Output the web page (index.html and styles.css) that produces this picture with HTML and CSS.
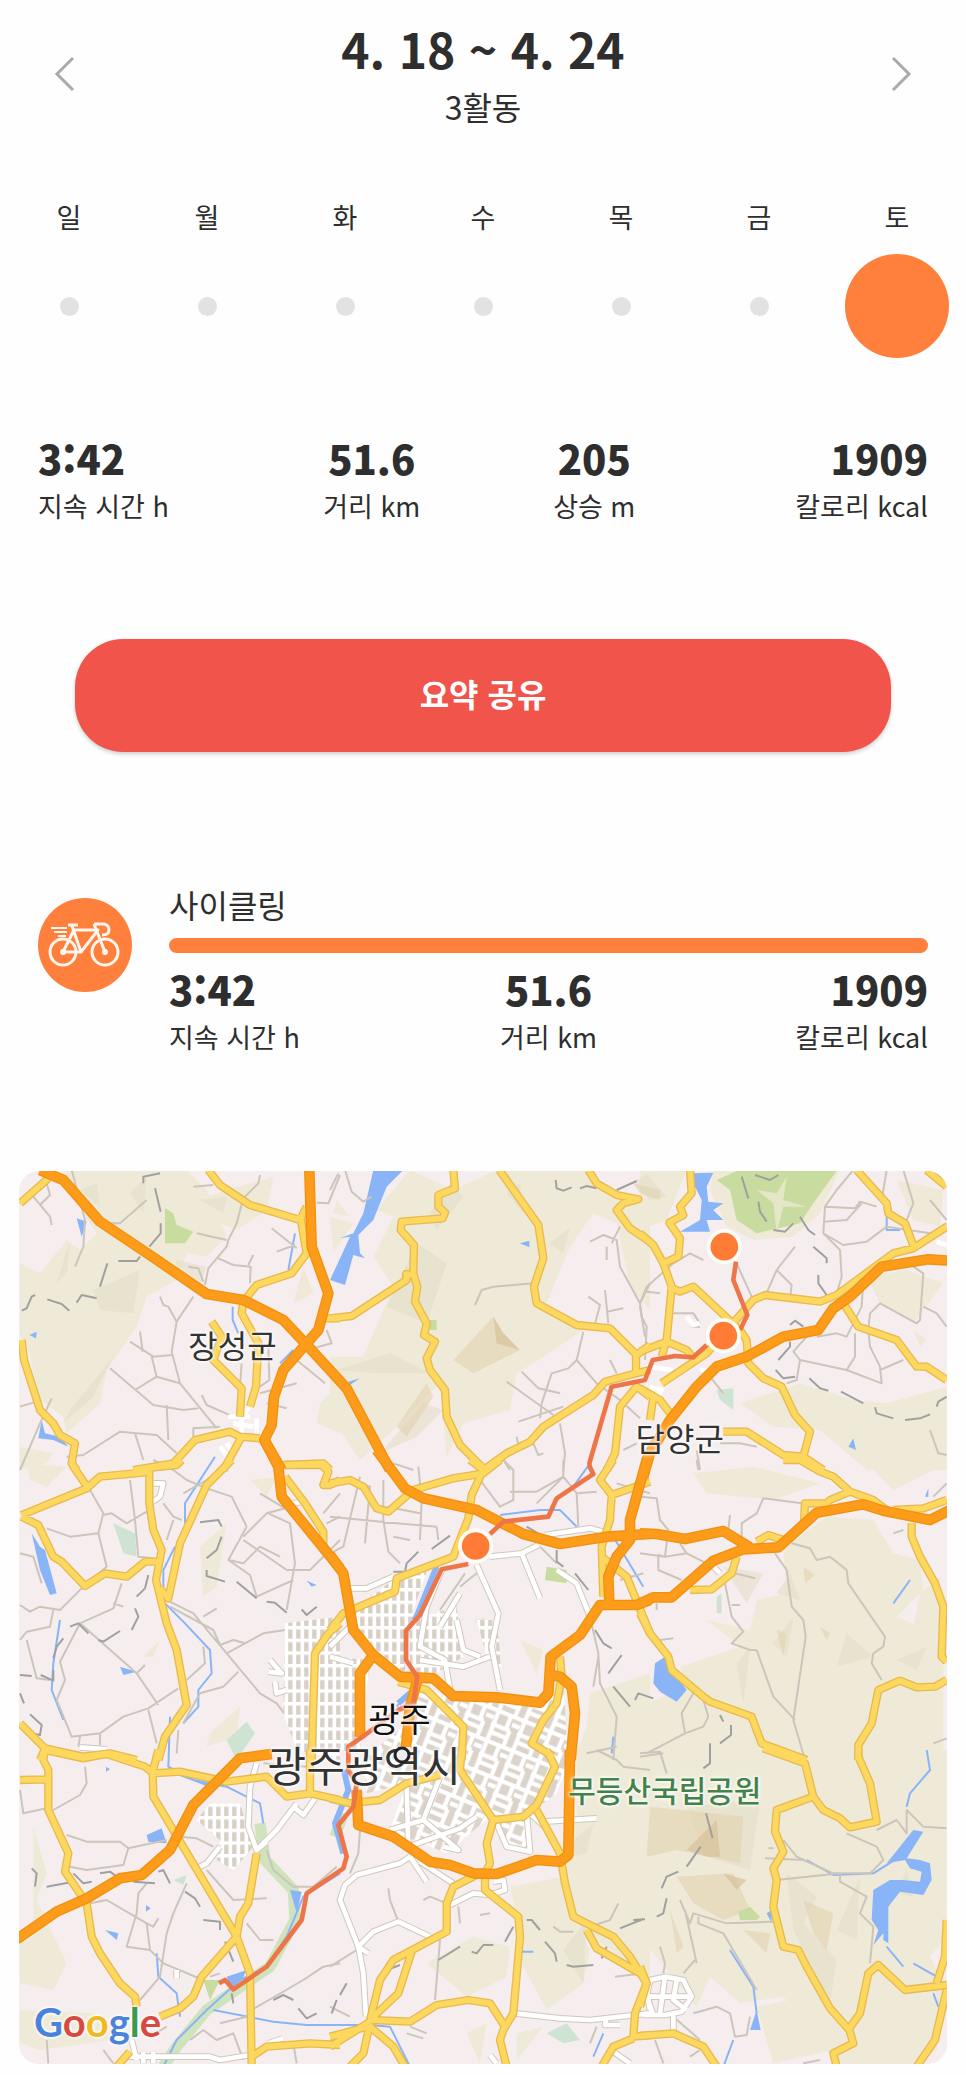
FILE: index.html
```html
<!DOCTYPE html>
<html lang="ko">
<head>
<meta charset="utf-8">
<meta name="viewport" content="width=device-width, initial-scale=1">
<title>주간 요약</title>
<link rel="stylesheet" href="styles.css">
</head>
<body>
<main class="summary">
  <header class="period">
    <button class="nav" type="button" aria-label="이전 주"><svg viewBox="0 0 48 48" aria-hidden="true"><path d="M32 8 16 24 32 40"/></svg></button>
    <div class="period-text">
      <h1>4. 18 ~ 4. 24</h1>
      <p>3활동</p>
    </div>
    <button class="nav" type="button" aria-label="다음 주"><svg viewBox="0 0 48 48" aria-hidden="true"><path d="M16 8 32 24 16 40"/></svg></button>
  </header>

  <ul class="week">
    <li><span>일</span><i class="dot"></i></li>
    <li><span>월</span><i class="dot"></i></li>
    <li><span>화</span><i class="dot"></i></li>
    <li><span>수</span><i class="dot"></i></li>
    <li><span>목</span><i class="dot"></i></li>
    <li><span>금</span><i class="dot"></i></li>
    <li><span>토</span><i class="dot active"></i></li>
  </ul>

  <dl class="stats totals">
    <div><dd>3:42</dd><dt>지속 시간 h</dt></div>
    <div><dd>51.6</dd><dt>거리 km</dt></div>
    <div><dd>205</dd><dt>상승 m</dt></div>
    <div><dd>1909</dd><dt>칼로리 kcal</dt></div>
  </dl>

  <button class="share" type="button">요약 공유</button>

  <section class="activity">
    <div class="sport">
      <svg viewBox="0 0 94 94" aria-hidden="true">
        <circle cx="25" cy="54" r="13"/><circle cx="67" cy="54" r="13"/>
        <path d="M25 54 36 32H60L43 54ZM43 54 34 28M30 27H40M56 26H66Q71 27 71 32T64 37M56 26 67 54"/>
        <path class="thin" d="M13 30H29M16 34H29M20 38H28"/>
        <circle class="hub" cx="25" cy="54" r="3"/><circle class="hub" cx="67" cy="54" r="3"/>
      </svg>
    </div>
    <div class="activity-body">
      <h2>사이클링</h2>
      <div class="bar"></div>
      <dl class="stats">
        <div><dd>3:42</dd><dt>지속 시간 h</dt></div>
        <div><dd>51.6</dd><dt>거리 km</dt></div>
        <div><dd>1909</dd><dt>칼로리 kcal</dt></div>
      </dl>
    </div>
  </section>

  <section class="map" aria-label="경로 지도">
    <svg class="map-art" viewBox="-3 3 2784 2679" preserveAspectRatio="xMidYMid slice" aria-hidden="true">
      <defs>
        <pattern id="grid" width="48" height="38" patternUnits="userSpaceOnUse"><rect width="48" height="38" fill="#d8d0c7"/><path d="M0 5H48M7 0V38M31 0V38" stroke="#fff" stroke-width="11"/></pattern>
        <pattern id="grid2" width="84" height="96" patternUnits="userSpaceOnUse" patternTransform="rotate(22)"><rect width="84" height="96" fill="#dcd4cb"/><path d="M0 6H84M0 50H60M8 0V96M48 0V50M60 50V96M8 74H60M60 30H84" fill="none" stroke="#fff" stroke-width="13"/></pattern>
        <g id="white-roads">
          <g transform="translate(0 870)"><path d="M400 70H430L420 110 398 125M180 862 260 868M750 600 785 640 745 635M765 665 770 700 800 690M820 130 850 125"/></g>
          <g transform="translate(930 870)"><path d="M60 385H110L190 350M440 315 505 460 485 560 510 690M480 290 575 280 625 255M575 280 630 415M645 225 780 205 820 215M680 330 740 370 780 470M335 330 290 440 270 560 345 600 360 690M390 400 330 500M270 600 400 620 480 590M380 480 400 570 450 590M0 560 60 500M0 590 70 610"/></g>
          <g transform="translate(1860 870)"><path d="M220 320 240 340"/></g>
          <g transform="translate(0 1740)"><path d="M710 40 690 110 685 230 710 300 770 240 830 160M520 360 560 340 600 290M885 145 850 195 820 170M710 300 740 275M745 880 790 865M335 870 350 930M310 920H570L600 930 690 915M370 905V940M400 905V940M470 660V685"/></g>
          <g transform="translate(930 1740)"><path d="M240 320 210 340 80 375 45 405 30 450 85 590 100 670 108 800M85 590 130 545 205 515 300 560M85 590 115 610M240 320 290 395M270 335 370 400M360 465 430 430 480 435 525 420 520 390 490 395M180 240 280 210 330 80M230 100 235 290 390 235 440 200M280 210 385 300 340 290M500 220 530 290 600 305 590 190M555 790 690 805 780 810 960 790M830 800 825 825H870M850 905 900 940M640 215 800 205M605 195 650 235M480 915 500 940M950 720 960 780"/></g>
          <g transform="translate(1860 1740)"><path d="M30 690 75 680 130 690 155 740 125 785 75 795H10M30 690 20 740 40 795M75 680 60 790M20 740H155M110 690 100 750 140 780M100 790V850"/></g>
        </g>
        <g id="yellow-roads">
          <path d="M0 100 85 25M565 0 600 45 690 105 840 150 860 110M840 135 860 250 815 310 710 345 670 395 665 430 715 520 708 650 690 710M575 455 605 500 580 570 665 655 660 740M960 445H910M5 510 12 570 60 720 100 760 120 795 165 820 155 880 170 900M340 900 460 880 525 810 630 785 660 800 720 805M665 800 610 900M790 885 910 880 930 900"/>
          <g transform="translate(930 0)"><path d="M370 0 375 55 325 75V110L345 128 338 145 215 155 212 180 252 225 250 310 262 350 255 395 290 460 282 495 315 515 290 565 300 600 345 660 350 740 390 825 460 895M0 445 65 438 230 330 228 312 250 315M508 0 625 165 640 265 612 350 620 400 740 465 840 475 920 555 960 525M918 555V610L825 635 790 675 640 770 600 815 530 850 460 900M918 610 960 600M775 0 800 40 860 75 925 88 880 100 860 120 900 175 960 215M960 680 920 650 870 710 855 850 830 900"/></g>
          <g transform="translate(1860 0)"><path d="M0 190 40 225 70 280 95 350 80 510 65 560M150 0 155 70 120 110 130 135 88 158 120 205 115 260 70 280M85 350 120 365 160 350 300 480 320 510 325 580 370 625 425 650 465 735 510 785 490 860 550 900M490 860 430 855 320 785H250M0 545 80 515 140 540 165 570M65 640 200 550 340 390 375 375 540 395 590 375 760 250 820 235 920 170M650 0 740 100 745 130 795 160 825 240M860 0 920 50M610 400 655 470 770 510 830 590H860L920 630M0 655 60 690 90 730M40 680 30 750"/></g>
          <g transform="translate(0 870)"><path d="M155 0 160 20 200 78M5 165 200 85 240 50 370 38 400 22 470 15 485 0M5 170 55 195 100 290 125 305 195 378 255 340 320 350 375 305H420M388 35V130L400 210 425 270 408 360 440 490 470 570 500 735 435 830 415 900M635 0 560 75 480 250 445 415 420 385M795 15H905L925 35 910 75H930L960 60M795 50 855 130 910 215V270M960 490 925 520 885 580 875 900M0 790 75 865 190 890 270 880 350 900M75 865 60 900"/></g>
          <g transform="translate(930 870)"><path d="M0 70 60 60 100 80 140 145 175 155 250 90 370 55 460 40 510 0M420 0 460 30 425 105 415 175 370 290 200 355 195 395 40 460 0 510M850 0 810 60 845 105 840 180 815 260 820 410M845 105 960 65M815 290 890 350 960 520M690 590 695 650 680 730 640 780 605 850 670 890M205 665 290 690 400 800 395 900"/></g>
          <g transform="translate(1860 870)"><path d="M480 0 540 35 580 50 630 95 570 120 560 130H495L492 185M630 95 700 120 740 150M760 150 850 145 920 120M815 190V230L840 290 885 370 910 440 905 590 920 605M920 660 885 680 830 682 780 662 715 690 695 790 655 855V900M430 0H480M0 460 30 520 85 590 95 630 190 710 210 725 335 770 365 850 500 900M350 245 385 225 430 240M150 390 215 388 275 340 290 290"/></g>
          <g transform="translate(0 1740)"><path d="M0 90 80 88M75 0 70 30 85 60V180L145 310 135 365 200 460 215 560 240 610 300 700 345 740 350 770M75 0 190 25 260 12 375 50 400 70 480 65 620 95 740 80 800 140 870 130 960 150M415 0 398 65 400 140 650 560 690 670 695 950M870 0V140M710 310 685 460 660 500 650 560 545 680 520 740 480 775 420 800M330 905 290 950M695 920 740 890 870 880 960 885"/></g>
          <g transform="translate(930 1740)"><path d="M0 145 60 160 150 150 230 100 330 75M395 0 390 60 490 210 580 200 620 165 675 50 650 0M490 210 470 280 480 340 465 370V420L565 500 570 560 550 790 520 840 510 870 530 950M450 370 370 410 350 460V545L190 630 150 690 120 810M245 605 205 730 120 810M120 810 240 815 320 765 415 750 480 760 525 830M120 815 0 890M120 820 100 910 60 950M110 830 40 850 0 860M120 830 190 890 225 950M620 180 690 310 705 400 730 500 850 560 900 620 950 700 915 790 910 860 960 855M910 865 850 890 815 950M770 540 800 595 930 670"/></g>
          <g transform="translate(1860 1740)"><path d="M370-5 495 40 520 140 410 180 405 245 430 305 400 355 410 390 400 470 430 590 475 600 500 650 570 775 628 840 640 880 580 910 590 950M520 140 550 180 600 205 630 232 710 215 690 100 655 20V0M628 835 660 790 685 670 715 645 795 720 920 705M0 650 20 700 0 770M0 858 100 850 190 890 230 950M920 510 915 620 890 700M920 720 885 870 830 950"/></g>
        </g>
        <g id="highways">
          <path d="M60 0 130 30 240 155 400 262 560 372 670 390 790 450 870 535 980 655 1110 900M868 0 875 230 925 370 895 480 790 600 762 680 755 765 733 810 785 900"/>
          <g transform="translate(0 870)"><path d="M733-60 775 20 785 110 960 325"/></g>
          <g transform="translate(930 870)"><path d="M140-30 225 85 280 115 440 150 580 222 690 252 830 230 960 222M0 285 40 340 70 510 130 585 210 650 310 655 370 708 500 712 630 728 655 700 662 590 750 525 810 435 920 435 960 420M130 585 90 640V830M665 645 690 650 725 680 735 760 722 900M265 650 240 740 228 860M980-60 950 0 900 180V240L860 290 835 350 838 430"/></g>
          <g transform="translate(1860 870)"><path d="M0 220 50 222 135 237 250 213 330 262M0 430 40 412H95L220 302 310 268 415 262 530 158 670 133 730 152 870 180 930 150"/></g>
          <g transform="translate(1860 0)"><path d="M930 272 865 268 725 290 630 380 580 415 535 480 430 500 320 560 230 590 170 650 90 750 30 850 10 920"/></g>
          <g transform="translate(0 1740)"><path d="M-10 568 110 485 200 445 300 385 365 375 450 300 520 165 610 75 660 25 755 12"/></g>
          <g transform="translate(930 1740)"><path d="M80 120 85 225 190 260 300 335 360 345 430 370 500 372 620 330 690 335 715 315 720 0"/></g>
        </g>
      </defs>

      <g class="hills">
        <path d="M130 0H500L560 60 620 200 560 260 500 250 470 330 380 380 350 470 260 600 240 700 140 790 130 740 60 690 20 520 0 500V280L60 310 140 210 180 240 230 190 170 100ZM480 110 620 60 760 20 740 120 650 180ZM960 640 900 700 890 760 960 790ZM260 420 330 400 290 520ZM850 290 880 370 820 400ZM0 830 100 850 80 880 0 900Z"/>
        <g transform="translate(930 0)"><path d="M240 0 370 60 500 0H760L830 60 960 90V420L900 350 860 160 790 130 720 230 650 400 760 480 640 560 560 610 540 720 400 760 350 860 330 640 180 790 90 870 0 740V560L100 560 190 350 130 260 190 140 140 120ZM0 140 70 160 10 250ZM20 90 60 140 10 130Z"/></g>
        <g transform="translate(1860 0)"><path d="M0 0H140L80 150 0 180ZM220 0H600L540 130 460 200 340 210 260 170 210 60ZM680 320 800 300 910 340 820 460 720 400ZM770 30 910 60 900 170 820 150ZM300 700 480 640 640 690 740 700 920 650V900H680L540 780 400 770ZM820 480 860 510 840 530Z"/></g>
        <g transform="translate(0 870)"><path d="M20 10 140 20 80 80 30 60ZM540 260 620 190 590 380 550 410ZM370 590 420 540 400 590ZM570 820 660 740 650 830 560 860ZM690 60 770 50 740 110Z"/></g>
        <g transform="translate(930 870)"><path d="M570 540 640 570 620 640ZM430 480 470 470 450 500ZM780 700 960 640V900H730L770 800Z"/></g>
        <g transform="translate(1860 870)"><path d="M160 40 340 20 540 70 400 120 200 100ZM490 220 560 170 700 180 760 280 840 300 850 390 770 470 910 530V900H0V740L140 680 120 620 300 560 200 480 330 510 350 420 440 400 430 260ZM670 0 880 30 760 90ZM840 400 900 350 900 560 820 500Z"/></g>
        <g transform="translate(0 1740)"><path d="M40 230 80 370 50 450 140 640 100 720 0 700V580L40 560ZM0 780 220 790 340 860 60 900 0 880Z"/></g>
        <g transform="translate(930 1740)"><path d="M740 0H960V700L830 590 750 540 700 420 720 260 740 200ZM540 410 700 380 740 520 780 600 760 700 650 780 580 650 560 500ZM290 640 430 560 540 590 530 680 410 740ZM410 850 470 820 450 940ZM560 850 640 830 560 930Z"/></g>
        <g transform="translate(1860 1740)"><path d="M0 0H920V560L870 620 910 700 890 900 820 950H600L430 740 300 760 210 680 170 770 0 560ZM350 770 500 740 580 900 400 940Z"/></g>
      </g>
      <g class="shade">
        <path d="M330 70 380 20 370 130ZM110 340 150 210 140 310ZM220 360 360 300 340 430 240 420ZM150 720 280 560 220 680 130 760ZM470 270 560 290 540 350 460 310ZM540 90 620 80 610 130ZM180 60 230 40 240 110Z"/>
        <path d="M1100 410 1190 220 1280 280 1220 460ZM1230 130 1290 40 1330 80 1250 180ZM950 600 1110 550 1230 610 1070 610ZM1460 70 1500 40 1510 130ZM1080 850 1210 700 1270 720 1190 800ZM1840 40 1880 10 1940 80 1890 90ZM1590 220 1650 170 1630 250Z"/>
        <path d="M2110 1190 2180 1300 2230 1210ZM2270 1270 2310 1210 2340 1290ZM2260 1420 2320 1340 2300 1460ZM2480 1390 2560 1460 2450 1490ZM2630 1470 2720 1430 2690 1500ZM2150 1480 2190 1430 2170 1600ZM2000 1910 2220 1890 2190 2100 2060 2060ZM2300 2110 2390 2180 2350 2260 2450 2370 2430 2500 2320 2280ZM2450 2280 2520 2120 2510 2310ZM2660 2100 2680 2180 2630 2170ZM1590 2070 1720 1960 1700 2050ZM1630 2340 1700 2250 1690 2440Z"/>
      </g>
      <g class="peaks">
        <path d="M1300 570 1420 440 1450 490 1500 540 1360 610ZM1130 770 1220 640 1240 680 1160 800ZM1840 40 1920 60 1920 90 1860 70Z"/>
        <path d="M1890 1910 2080 1930 2170 1940 2160 2080 1970 2040 1880 2060ZM1970 2120 2140 2110 2190 2220 2110 2250 2020 2200ZM2350 2190 2440 2230 2420 2340 2380 2290ZM2270 1380 2300 1390 2290 1460ZM2350 1190 2385 1215 2355 1240ZM2400 1370 2430 1390 2420 1410ZM1950 2220 1990 2330 1970 2350ZM2170 2280 2250 2290 2240 2350Z"/>
      </g>
      <path class="peak-core" d="M2000 2040 2090 1950 2100 2060 2060 2060ZM1420 440 1450 490 1500 540 1430 520ZM2110 2110 2180 2130 2150 2160Z"/>
      <g class="parks">
        <path d="M435 115 460 130 470 165 520 185 495 220 435 220ZM1230 450H1250V480H1230ZM2090 30 2150 3H2450L2380 100 2340 160 2210 190 2150 150 2130 60ZM1580 1190 1640 1200V1240L1575 1230ZM1130 1440H1155V1490L1120 1480ZM2155 2225 2190 2210 2220 2240 2210 2250H2160ZM550 2430 600 2430 570 2490ZM1310 1605 1350 1590 1320 1630Z"/>
      </g>
      <path class="park-light" d="M2210 60 2270 70 2300 20 2290 90 2360 110 2290 110 2270 190 2260 100Z"/>
      <path class="woods" d="M280 1060 345 1090 350 1160 310 1150ZM620 1710 680 1655 705 1690 650 1770ZM2090 660 2140 655 2140 720 2100 690ZM1580 2590 1640 2560 1680 2610 1630 2620ZM460 2130 500 2115 490 2145ZM2090 1280 2105 1270V1330H2090Z"/>

      <g class="riverbank">
        <path d="M720 1960 735 2070 820 2160 825 2250 750 2390 560 2520 470 2630 430 2690M970 1930 945 2000"/>
      </g>
      <g class="river">
        <path d="M825 190 805 300M638 410V450L655 490M820 540 780 580M2600 140V180H2640M585 860 495 1000V1060M465 1130 430 1200V1250M435 1300 495 1360 570 1440 575 1510 535 1560V1610L490 1660M450 1640 445 1790 520 1830 620 1850 720 1900 730 1960M480 1815 560 1845M120 1350 100 1480 95 1560 130 1650M1180 1550 1130 1610M1440 1035 1560 1020 1620 1020 1670 1070M1760 700 1710 880 1660 950M960 2110 850 2180 800 2300 740 2390 660 2430 560 2520 470 2610 430 2690M580 2520 760 2555 860 2565 1050 2565 1110 2570 1170 2690M1780 1100 1870 1250M1775 1750 1780 1700M2680 1080V1130M2670 1230 2620 1300M2360 2070 2440 2115 2560 2110 2640 2060M2720 1740 2730 1800 2670 1870 2660 1910M2600 2330 2650 2390M2680 2380 2750 2420M2740 2470 2755 2510M2130 2340 2200 2450 2210 2530M2140 2610 2110 2690M1750 2590 1720 2660M410 2350 415 2420 470 2470 480 2540M1490 2345H1540"/>
        <path class="wide" d="M1250 1190 1190 1340 1150 1390 1145 1500M1170 1570 1135 1600M990 1690 970 1740M972 1800 985 1860 945 1960 970 2050"/>
      </g>
      <g class="lakes">
        <path d="M1060 0H1150L1100 50 1060 150 1015 195 1020 250 1035 265 1000 255 975 345 930 330 990 200 960 205 1000 190 1030 130ZM170 145 200 155 185 200ZM28 495 50 485 48 505ZM1500 220 1528 212V232ZM985 635 1020 625 990 645ZM2020 10 2080 8 2060 50 2065 95 2110 100 2080 120 2110 150 2060 150 2070 185 1980 185 2040 150 2045 90 2025 50ZM65 750 75 790 120 800 145 830 100 810 55 805ZM35 1090 60 1130 75 1140 110 1270 90 1275 60 1200ZM860 1232 890 1245 875 1250ZM300 1490 350 1505 310 1515ZM1905 1480 1935 1460 1950 1510 1980 1530 2000 1560 1970 1595 1920 1565 1900 1540ZM380 1995 425 1975 440 2020 385 2015ZM255 2280 295 2290 290 2310ZM378 2205 392 2215 378 2225ZM258 1790 270 1798 258 1805ZM2680 1980 2710 1985 2660 2065 2700 2070 2730 2080 2735 2130 2710 2175 2640 2165 2605 2210V2320L2590 2310 2590 2290 2560 2325 2575 2280 2555 2250 2560 2160 2610 2130 2650 2130 2700 2135 2705 2105 2670 2095 2655 2070 2600 2080ZM2240 2230 2255 2220V2260ZM2210 2520 2222 2580 2190 2580ZM2485 830 2500 805 2508 840ZM2715 980 2725 955V980ZM2255 1580 2265 1595ZM620 2420 680 2400 665 2430 630 2450ZM810 2160 845 2165 830 2230Z"/>
      </g>

      <g class="lanes">
        <path d="M155 0 195 150 190 230 165 290M40 80 90 140 95 165M60 105 90 75 80 40M270 160 300 160 380 90M520 50 580 45M720 15 715 40 670 85 650 160 625 210 620 230 565 295 555 345M530 190 620 210M505 290 535 295 550 335M595 265 640 285 692 290 690 340M700 255 685 285M755 175 830 235M770 245 825 225M960 15 925 100 890 98M520 380 470 455 455 545 480 640 590 775M420 380 430 405 445 410 470 455M330 515 400 560 455 555M360 485 368 545M270 595 400 705 490 720 535 715M345 660 410 620 395 560M410 620 480 640M440 705 445 810M0 900 60 760 95 685M0 710 50 695M140 860 190 855 300 785 410 795 470 850M345 790 370 870M545 675 560 705 640 740M920 480 935 520 880 535M830 570 915 640M745 530 748 630 720 650M665 580 660 650M520 800V775L600 770M740 700 800 715M720 670 830 640"/>
        <g transform="translate(930 0)"><path d="M45 0 65 65 100 95 125 80M25 10 0 60M435 405 455 360 490 350 610 340M575 605 625 655 690 670M530 635 670 735M760 485 740 570 715 595 665 610 635 700 630 745M740 570 800 640 870 690 930 745M565 755 700 710M780 215 820 195 860 210 870 290 930 400 935 440 950 470 945 570M870 170 845 220M830 230V270M775 380 810 405 790 480M825 360 835 460M830 425 880 415M930 400 960 340M690 760 705 850 700 900M560 800 565 825M610 820 625 855 640 850M840 570 860 610M880 840 920 820M190 880 250 900M520 870 540 900"/></g>
        <g transform="translate(1860 0)"><path d="M0 400 20 350 100 280 150 250 190 270M465 230 410 300 375 380M410 300 455 345 450 385M290 280 335 380M640 0 590 60 555 110 550 190 600 240 605 320 590 370 600 400M555 110 645 115 660 95 710 110M550 155 620 150 665 100M550 190 610 225 680 215 740 170 870 190 920 160M790 0 820 100 800 150M870 90 920 150M740 0 725 90M670 330 665 410 620 500 590 490 530 500M820 290 850 310 840 450 830 460 720 400 690 430 685 480 690 530 720 590M645 490 645 560 620 600M720 590 725 640 620 600 480 570 460 545 500 500M720 600 790 570M850 410 890 430 920 470M480 570 470 630 440 640M870 780 895 850 920 855M155 470 180 470M100 430 160 430 180 460M20 365 60 370M210 620 250 670M240 820 300 820 350 830M0 410 15 500M170 840 180 900"/></g>
        <g transform="translate(0 870)"><path d="M80 205 150 230 235 220 250 160 210 90M250 165 275 160 320 190 380 155M330 60 345 180 355 290 400 295M235 220 260 320 190 380 120 450 60 440 30 455 0 435M100 450 90 500 20 515 0 540M20 540 50 655 90 660M305 370 280 445 180 490 120 605 135 660 110 720 155 830 240 820 310 770 385 745 475 685M180 490 350 640 415 735M385 750 410 850M350 640 375 615M280 430 310 440M240 820V855M430 130 460 170 485 180M400 0 460 30 500 60 560 85 635 110 680 200M490 100 560 60 600 30M670 230 740 160 795 145 720 100M680 200 625 300 690 345 710 410M625 300 670 310 720 260 780 290M670 240 800 330 870 330 960 240M745 160 810 190 825 310 800 450M710 410 820 360M430 415 520 460 620 580 720 700 770 730 800 770M450 440 580 510 600 555 640 540 675 550 620 580M675 550 730 520 795 510M550 470 590 445M655 635 610 680 540 700 490 790M550 560 555 610 500 660M475 810 470 880M440 240 460 180M0 280 40 290 65 370M960 100 910 160M960 170 920 190M180 830 175 860"/></g>
        <g transform="translate(930 870)"><path d="M90 50 40 260 0 280M60 60 120 80 105 250M0 170 200 190 320 200M160 60 160 180 175 275 210 310M170 140 270 160M265 20 275 120 270 240M320 200 325 240M450 60 510 140 550 120 550 30 520 0M540 95H620L700 50V0M620 130 700 50 740 100 800 95M740 100 745 200M630 260 680 310M780 470 805 580 810 670 860 770 850 900M860 860 770 880M405 340 330 450M790 680 805 590M860 70 960 100M870 360 940 340M190 230 240 240M390 380 440 340"/></g>
        <g transform="translate(1860 870)"><path d="M0 110 50 115 60 180 85 210 75 290 55 285V330L125 360M0 280 75 290 140 280M120 250 140 280 220 320M270 165 265 210M305 230V190L350 160 370 115 485 130M405 280 440 330 455 440 490 480 497 530 460 780 495 900M455 250 510 265 530 300 570 290 620 330 625 370 680 450 735 530 730 560 700 580 695 610 725 660M350 570 400 710 465 780M255 370 275 470 310 515 275 550 330 570 350 570M275 435H300M285 340 345 355M760 220 790 210M50 430V450M60 540 100 535M160 700 125 760 135 820M190 720 205 770 190 800 135 820 20 880M880 110 920 70M0 890 70 880M170 0 175 30M880 850 920 835"/></g>
        <g transform="translate(0 1740)"><path d="M195 50 200 100 180 135 100 180M140 255 200 275H300L325 295 310 345 200 360 150 350M325 295 440 270M480 260 530 265 580 290M0 120 10 190 80 175M210 460 260 450 380 520 390 600 430 640 550 690M380 400 355 430 350 490 320 590 390 600M500 400 460 490 440 550 420 680 360 750M415 505 400 530 380 520M560 360 640 450 740 445M570 680 600 670M680 520 720 570 760 570M730 40 860 50M740 300 760 360 820 410 880 410 950 350M695 780 850 690 910 650 960 640M510 870 550 840 590 870 640 850 670 930M80 870 85 940M250 900 280 940M600 820 680 800M820 880 830 940M390 860 440 830"/></g>
        <g transform="translate(930 1740)"><path d="M90 240 85 310 60 370M330 570 315 750M205 515 180 450 175 415M280 450 300 440 350 460M0 650 80 600M385 470 390 520M450 495 480 490M865 460 840 510 780 530M670 530 690 545 730 545M855 680 940 670M960 730 970 800M240 830 290 850M230 850 280 865M800 830 780 880M0 770 60 800M800 0 860 30 880 50 960 60"/></g>
        <g transform="translate(1860 1740)"><path d="M0 10 60 5 80 70M430 270 470 320 580 370 690 370 730 330 710 290 620 250M375 325 490 330 580 370M410 390 600 370 600 395 680 440 660 490 700 530 690 640M710 240 770 210 800 250 800 180 850 230 920 235M120 450 150 520 160 490 260 520 400 515M135 480 170 640M175 500V520L250 550 350 720M60 590 75 640 70 670M165 630 130 670M160 790 230 770 270 790 285 860 320 855 330 800M100 800 180 870M45 870 70 940M180 900 150 920M490 940 540 930M385 295H400"/></g>
      </g>
      <path class="borders" d="M420 10 370 20V40M405 55 422 125M422 160V190L388 230M360 260 350 273H295M262 280 240 350M230 385 185 375 170 398M148 422 125 402 82 388M45 375 35 380 20 415 5 422M1607 30 1610 55 1630 62 1655 52M1680 55 1700 48 1730 55M1790 60 1850 33M2165 20 2185 85M2205 15 2250 30 2275 15M2215 95 2220 125 2240 155M2260 180 2295 185 2320 160M2340 140 2365 180 2385 195M2380 230 2420 265V280M2395 315 2395 340 2420 375M2310 465 2325 452 2350 470M2310 515V530L2275 570M2267 600 2290 625 2325 620M2368 625 2400 655 2425 662M2463 665 2530 700M2565 712 2570 730 2620 745M2655 750 2700 745 2730 733M2750 710 2755 695 2780 680M540 1057 595 1050 605 1070M605 1100 590 1140 560 1165M560 1200V1218L615 1235M650 1235 710 1285M740 1295 765 1298 800 1328M845 1318 860 1335 890 1310M385 1215 375 1255 350 1280M345 1315 355 1340 335 1380M300 1383 250 1415 235 1410M205 1390 175 1360 150 1370M130 1405 110 1430 100 1465M100 1500V1532L62 1515M35 1518 0 1515M0 1570 12 1600M30 1633 65 1665 60 1695 45 1692M1290 1097 1235 1137M1195 1145 1160 1180 1155 1205 1120 1205M1610 1140 1610 1175 1630 1190M1520 1070 1570 1100M1665 1210 1705 1260M1725 1380 1750 1420 1775 1435M1805 1455 1765 1510M1780 1550 1830 1610M1845 1590 1855 1570 1900 1585M2100 1635 2110 1655M2133 1665V1695L2100 1720M2070 1720V1780L2050 1795M2058 1930 2078 2005M2042 2030 2000 2090M1975 2105 1940 2120 1925 2155M1940 2185 1930 2230 1910 2240M1875 2248 1840 2250M80 2150 160 2135M160 2110 190 2140 215 2135M240 2110 270 2105 290 2120M340 2135 405 2140M415 2105 430 2100 450 2140M495 2165 525 2185 540 2210M550 2250 600 2255V2280M615 2315 640 2375M635 2470 640 2500M35 2095 50 2110 45 2150M760 2490 790 2475 820 2490M835 2515 860 2545 890 2530M935 2530 950 2490M960 2475 980 2440M1255 2370 1320 2330M1355 2345 1370 2350 1390 2325 1420 2325M1455 2315 1480 2270M1520 2250 1535 2250 1560 2280M1575 2315 1605 2350 1610 2375M1640 2385 1660 2390 1720 2385M1800 2275 1870 2247M1100 2400 1140 2385M1090 2430 1110 2395M1745 2365 1760 2330"/>

      <g fill="url(#grid)">
        <path d="M795 1360 960 1340V1770L830 1740 790 1630ZM930 1460 1050 1470 1020 1740H930ZM990 1330 1130 1220 1220 1205 1180 1320 1150 1510 1060 1450 1000 1370Z"/>
        <path d="M1170 1350 1310 1310 1330 1460 1230 1520 1170 1510ZM1370 1350H1430L1445 1500 1400 1460ZM530 1950 570 1900H660L700 2030 640 2100 590 2070 600 2010Z"/>
      </g>
      <path fill="url(#grid2)" d="M1200 1550 1310 1590 1570 1605 1630 1530 1645 1780 1610 1870 1530 1930V2040L1450 2030 1410 1940 1280 2050 1110 1980 1160 1840 1040 1870 1030 1770 1170 1650Z"/>

      <use class="white-case" href="#white-roads"/><use class="white-fill" href="#white-roads"/>
      <path class="town" d="M625 740H690M640 760 700 770M690 705 665 745V790M710 745V790M620 820 640 850M600 830 630 870M2040 600 2090 600M1890 650 1925 660 1910 680M2000 440 2020 465 2040 460M2750 215 2780 225M1880 590 1960 600"/>
      <use class="yellow-case" href="#yellow-roads"/><use class="yellow-fill" href="#yellow-roads"/>
      <use class="highway-case" href="#highways"/><use class="highway-fill" href="#highways"/>

      <path class="route" d="M2148 275 2140 330 2182 435 2160 480M2060 525 2020 562 1965 558 1898 570 1875 630 1775 650 1708 880 1710 892 1720 912 1610 985 1585 1040 1450 1055 1410 1092M1345 1182 1265 1198 1200 1335 1158 1382V1470L1192 1520 1180 1600 1135 1620 1035 1695 985 1730V1800L1010 1840 1000 1910 955 1965 980 2060 970 2095 860 2170 845 2250 740 2390 640 2458 615 2430 597 2440"/>
      <g class="stops"><circle cx="2113" cy="230" r="47"/><circle cx="2110" cy="497" r="47"/><circle cx="1367" cy="1128" r="47"/></g>
    </svg>
    <span class="place jangseong">장성군</span>
    <span class="place damyang">담양군</span>
    <span class="place gwangju">광주</span>
    <span class="place metro">광주광역시</span>
    <span class="place park-name">무등산국립공원</span>
    <i class="city-dot"></i>
    <a class="google" href="#" aria-label="Google"><span class="blue">G</span><span class="red">o</span><span class="gold">o</span><span class="blue">g</span><span class="green">l</span><span class="red">e</span></a>
  </section>
</main>
</body>
</html>
```

FILE: styles.css
```css
* { box-sizing: border-box; }
body {
  margin: 0;
  background: #fefefe;
  color: #2e2e2e;
  font-family: "Noto Sans CJK KR", "Noto Sans", sans-serif;
}
h1, h2, p, ul, dl, dd { margin: 0; padding: 0; }
button { border: 0; padding: 0; font: inherit; cursor: pointer; }

.summary { padding: 18px 0 11px; }

.period {
  display: flex;
  align-items: center;
  justify-content: space-between;
  padding: 0 41px;
}
.period-text { text-align: center; }
h1 { font-size: 48px; line-height: 60px; font-weight: 700; }
.period-text p { margin-top: 4px; font-size: 32px; line-height: 48px; }
.nav { width: 48px; height: 48px; background: none; }
.nav svg { display: block; width: 48px; height: 48px; fill: none; stroke: #aaa; stroke-width: 3; }

.week {
  display: grid;
  grid-template-columns: repeat(7, 1fr);
  margin-top: 67px;
  list-style: none;
}
.week li { display: flex; flex-direction: column; align-items: center; gap: 17px; }
.week li span { font-size: 27px; line-height: 40px; }
.dot { display: block; width: 19px; height: 19px; margin: 43px 0 42px; border-radius: 50%; background: #e2e2e2; }
.dot.active { width: 104px; height: 104px; margin: 0; background: #ff7f3c; }

.stats { display: grid; grid-auto-flow: column; grid-auto-columns: 1fr; text-align: center; }
.stats div { display: flex; flex-direction: column; gap: 4px; }
.stats div:first-child { text-align: left; }
.stats div:last-child { text-align: right; }
.stats dd { font-size: 40px; line-height: 48px; font-weight: 900; }
.stats dt { order: 2; font-size: 27px; line-height: 40px; }
.totals { margin-top: 76px; padding: 0 38px; }

.share {
  display: block;
  width: calc(100% - 150px);
  height: 113px;
  margin: 113px auto 0;
  padding-bottom: 6px;
  border-radius: 48px;
  background: #f0544a;
  box-shadow: 0 2px 4px rgba(0, 0, 0, .2);
  color: #fff;
  font-size: 32px;
  font-weight: 700;
}

.activity { display: flex; gap: 37px; margin-top: 128px; padding: 0 38px; }
.sport { flex: none; width: 94px; height: 94px; margin-top: 18px; border-radius: 50%; background: #ff7f3c; }
.sport svg { display: block; fill: none; stroke: #fff6ee; stroke-width: 3; stroke-linejoin: round; }
.sport .thin { stroke-width: 2; }
.sport .hub { fill: #fff6ee; stroke: none; }
.activity-body { flex: 1; }
h2 { font-size: 32px; line-height: 48px; font-weight: 400; }
.bar { height: 15px; margin: 10px 0 12px; border-radius: 8px; background: #ff7f3c; }

.map {
  position: relative;
  margin: 114px 19px 0;
  overflow: hidden;
  border-radius: 20px;
  background: #f6eeee;
}
.map-art { display: block; width: 100%; fill: none; stroke-linejoin: round; }
.hills { fill: #eeead7; }
.shade { fill: #e4dec8; opacity: .6; }
.peaks { fill: #e2d2b0; opacity: .6; }
.peak-core { fill: #d6bd92; opacity: .6; }
.parks { fill: #c8dc9f; }
.park-light { fill: #e4e6c6; }
.woods { fill: #cfe3d3; }
.riverbank { stroke: #cfe3bd; stroke-width: 34; }
.river { stroke: #8ab4f8; stroke-width: 6; }
.river .wide { stroke-width: 18; }
.lakes { fill: #8ab4f8; }
.lanes { stroke: #cbc5bb; stroke-width: 6; }
.borders { stroke: #a0a0a0; stroke-width: 6; }
.white-case { stroke: #cfc8bd; stroke-width: 20; }
.white-fill, .town { stroke: #fff; stroke-width: 14; }
.yellow-case { stroke: #e8b94f; stroke-width: 25; }
.yellow-fill { stroke: #fdd85f; stroke-width: 17; }
.highway-case { stroke: #f0920f; stroke-width: 32; }
.highway-fill { stroke: #fd9b1b; stroke-width: 24; }
.route { stroke: #ed7548; stroke-width: 14; }
.stops { fill: #ff7b36; stroke: #fffdf8; stroke-width: 11; }

.place {
  position: absolute;
  transform: translate(-50%, -50%);
  color: #333;
  font-size: 32px;
  line-height: 40px;
  white-space: nowrap;
  text-shadow: 0 0 3px #fff, 0 0 3px #fff, 0 0 5px #fff;
}
.jangseong { left: 23%; top: 19.4%; }
.damyang { left: 71.2%; top: 29.8%; }
.gwangju { left: 41%; top: 61.3%; font-size: 34px; line-height: 34px; color: #111; }
.metro { left: 37.2%; top: 66.4%; font-size: 42px; line-height: 42px; }
.park-name { left: 69.6%; top: 69.2%; font-size: 30px; font-weight: 500; color: #43824a; }
.city-dot {
  position: absolute;
  left: 41.3%;
  top: 65.4%;
  width: 17px;
  height: 17px;
  transform: translate(-50%, -50%);
  border: 3px solid #222;
  border-radius: 50%;
  background: #eee;
}
.google {
  position: absolute;
  left: 15px;
  bottom: 18px;
  font-family: Lato, sans-serif;
  font-size: 40px;
  line-height: 48px;
  font-weight: 700;
  text-decoration: none;
  text-shadow: 0 0 3px #fff, 0 0 3px #fff, 0 0 4px #fff;
}
.blue { color: #4a83dc; }
.red { color: #d8493f; }
.gold { color: #f0b921; }
.green { color: #3b9a51; }
```
